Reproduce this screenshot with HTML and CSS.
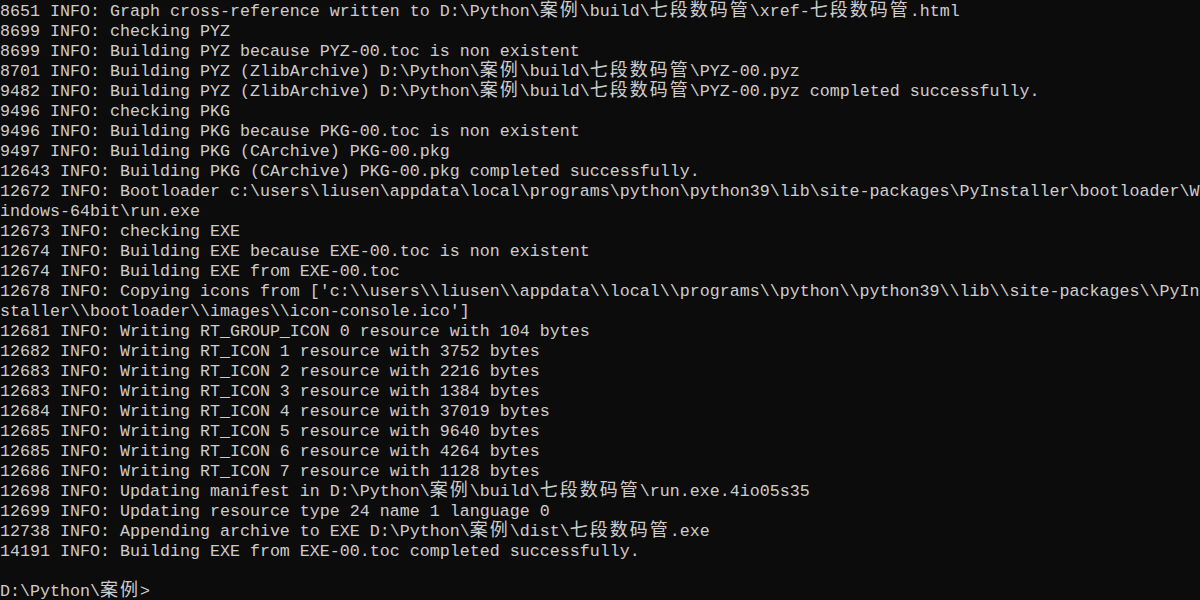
FILE: index.html
```html
<!DOCTYPE html>
<html>
<head>
<meta charset="utf-8">
<link rel="stylesheet" href="styles.css">
</head>
<body>
<div class="console">
<div class="l">8651 INFO: Graph cross-reference written to D:\Python\<span class="c">案例</span>\build\<span class="c">七段数码管</span>\xref-<span class="c">七段数码管</span>.html</div>
<div class="l">8699 INFO: checking PYZ</div>
<div class="l">8699 INFO: Building PYZ because PYZ-00.toc is non existent</div>
<div class="l">8701 INFO: Building PYZ (ZlibArchive) D:\Python\<span class="c">案例</span>\build\<span class="c">七段数码管</span>\PYZ-00.pyz</div>
<div class="l">9482 INFO: Building PYZ (ZlibArchive) D:\Python\<span class="c">案例</span>\build\<span class="c">七段数码管</span>\PYZ-00.pyz completed successfully.</div>
<div class="l">9496 INFO: checking PKG</div>
<div class="l">9496 INFO: Building PKG because PKG-00.toc is non existent</div>
<div class="l">9497 INFO: Building PKG (CArchive) PKG-00.pkg</div>
<div class="l">12643 INFO: Building PKG (CArchive) PKG-00.pkg completed successfully.</div>
<div class="l">12672 INFO: Bootloader c:\users\liusen\appdata\local\programs\python\python39\lib\site-packages\PyInstaller\bootloader\W</div>
<div class="l">indows-64bit\run.exe</div>
<div class="l">12673 INFO: checking EXE</div>
<div class="l">12674 INFO: Building EXE because EXE-00.toc is non existent</div>
<div class="l">12674 INFO: Building EXE from EXE-00.toc</div>
<div class="l">12678 INFO: Copying icons from ['c:\\users\\liusen\\appdata\\local\\programs\\python\\python39\\lib\\site-packages\\PyIn</div>
<div class="l">staller\\bootloader\\images\\icon-console.ico']</div>
<div class="l">12681 INFO: Writing RT_GROUP_ICON 0 resource with 104 bytes</div>
<div class="l">12682 INFO: Writing RT_ICON 1 resource with 3752 bytes</div>
<div class="l">12683 INFO: Writing RT_ICON 2 resource with 2216 bytes</div>
<div class="l">12683 INFO: Writing RT_ICON 3 resource with 1384 bytes</div>
<div class="l">12684 INFO: Writing RT_ICON 4 resource with 37019 bytes</div>
<div class="l">12685 INFO: Writing RT_ICON 5 resource with 9640 bytes</div>
<div class="l">12685 INFO: Writing RT_ICON 6 resource with 4264 bytes</div>
<div class="l">12686 INFO: Writing RT_ICON 7 resource with 1128 bytes</div>
<div class="l">12698 INFO: Updating manifest in D:\Python\<span class="c">案例</span>\build\<span class="c">七段数码管</span>\run.exe.4io05s35</div>
<div class="l">12699 INFO: Updating resource type 24 name 1 language 0</div>
<div class="l">12738 INFO: Appending archive to EXE D:\Python\<span class="c">案例</span>\dist\<span class="c">七段数码管</span>.exe</div>
<div class="l">14191 INFO: Building EXE from EXE-00.toc completed successfully.</div>
<div class="l"></div>
<div class="l">D:\Python\<span class="c">案例</span>&gt;</div>
</div>
</body>
</html>
```

FILE: styles.css
```css
html, body {
  margin: 0;
  padding: 0;
  background: #0c0c0c;
  overflow: hidden;
}
.console {
  width: 1200px;
  height: 600px;
  padding-top: 2px;
  box-sizing: border-box;
  color: #cccccc;
  font-family: "Liberation Mono", "Noto Sans CJK SC", monospace;
  font-size: 16.667px;
}
.l {
  height: 20px;
  line-height: 20px;
  white-space: pre;
}
.c {
  font-family: "Noto Sans CJK SC", sans-serif;
  font-size: 18px;
  letter-spacing: 2px;
  line-height: 0;
}
```
